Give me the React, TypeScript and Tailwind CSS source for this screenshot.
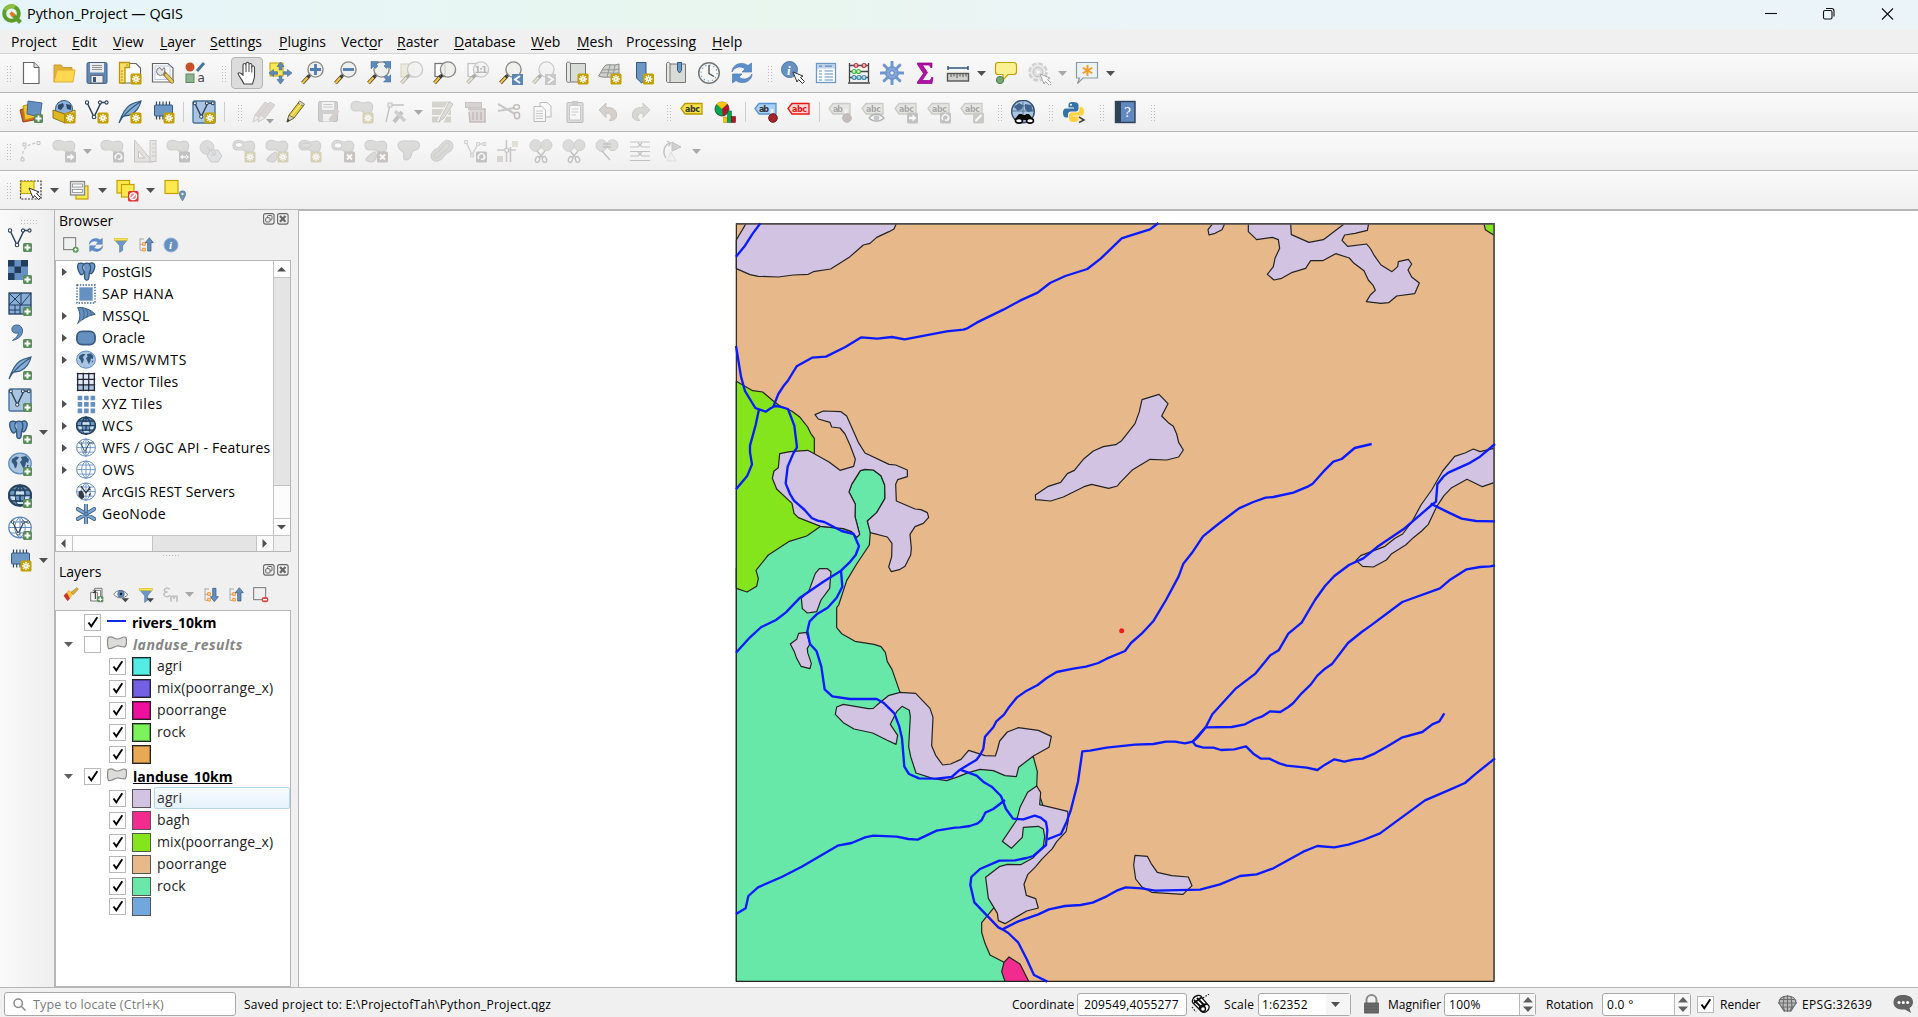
import React from "react";

type IconProps = { children: React.ReactNode; off?: boolean; size?: number; vb?: string };

function Ico({ children, off, size = 24, vb = "0 0 24 24" }: IconProps) {
  return (
    <svg width={size} height={size} viewBox={vb} fill="none" className={off ? "shrink-0 opacity-40 grayscale-[60%]" : "shrink-0"}>
      {children}
    </svg>
  );
}

/* ---------- shared badges ---------- */
const Star = ({ x = 12.5, y = 12.5 }: { x?: number; y?: number }) => (
  <g transform={`translate(${x} ${y})`}>
    <rect width="11" height="11" rx="1.5" fill="#c4a000" />
    <path d="M5.500 1.600V9.400M1.600 5.500H9.400M2.800 2.800L8.200 8.200M8.200 2.800L2.800 8.200" stroke="#fff" strokeWidth="1.300" />
    <circle cx="5.500" cy="5.500" r="1.500" fill="#fff" />
    <circle cx="5.500" cy="5.500" r="0.700" fill="#c4a000" />
  </g>
);
const Plus = ({ x = 14, y = 14, s = 1 }: { x?: number; y?: number; s?: number }) => (
  <g transform={`translate(${x} ${y}) scale(${s})`}>
    <rect width="9" height="9" rx="1.500" fill="#5a8c5a" />
    <path d="M4.500 1.500V7.500M1.500 4.500H7.500" stroke="#fff" strokeWidth="2" />
  </g>
);
const Square = ({ children, fill = "#7a7a7a" }: { children: React.ReactNode; fill?: string }) => (
  <g transform="translate(13 12.5)">
    <rect width="11" height="11" rx="1.500" fill={fill} />
    {children}
  </g>
);
const ArrowBadge = () => <Square><path d="M2 4.300h3.500V2L9.500 5.500L5.500 9V6.700H2Z" fill="#fff" /></Square>;
const TurnBadge = () => <Square><path d="M3 7.500A3.200 3.200 0 1 1 7.500 8M7.500 8l.5-2.500M7.500 8L4.800 7.500" stroke="#fff" strokeWidth="1.400" /></Square>;
const SpreadBadge = () => <Square><path d="M1 5.500L4 3V8ZM10 5.500L7 3V8ZM3 4.700H8V6.300H3Z" fill="#fff" /></Square>;
const CrossBadge = () => <Square fill="#9c7575"><path d="M3 3L8 8M8 3L3 8" stroke="#fff" strokeWidth="2" /></Square>;

const Blob = ({ d }: { d?: string }) => (
  <path d={d || "M1 6.500C1 3 3.500 1.300 6.500 1.300C10 1.300 11 3.500 14 3C17 2.300 19 1.500 21 3C23.500 5.500 22.500 9.500 21 12C19 14.500 15 14 13 12C11.500 10.500 10 10.500 7.500 10.800C3.500 11.200 1 10 1 6.500Z"} fill="#b2b5ae" stroke="#999c96" strokeWidth="1.300" />
);

const Lens = ({ children, cx = 14.5, cy = 8.500 }: { children?: React.ReactNode; cx?: number; cy?: number }) => (
  <>
    <path d="M8 15L1.500 22" stroke="#3c3c3c" strokeWidth="3.600" />
    <path d="M6.500 16.500L1.500 22" stroke="#f5c33b" strokeWidth="2.200" />
    <path d="M10 13L8 15" stroke="#222" strokeWidth="3" />
    <circle cx={cx} cy={cy} r="7.600" fill="#eeeeec" fillOpacity=".88" stroke="#888a85" strokeWidth="1.400" />
    {children}
  </>
);

const Globe = ({ dark, light }: { dark?: boolean; light?: boolean }) => (
  <>
    <ellipse cx="12" cy="11.500" rx="11.300" ry="10.300" fill={dark ? "#6d97c4" : light ? "#fff" : "#a9c5e2"} stroke={dark ? "#2a4560" : "#5f8cc0"} strokeWidth={dark ? 2 : 1.200} />
    {!dark && !light && (
      <path d="M4 7L8 4.500L11 5L10 7L8 8.500L9.500 11L8.500 15L7 16.500L5.500 12L3.500 10ZM13 5L18 4L21 7.500L20 11L18 10L17.500 13L15.500 17L13.500 13L12 10L14 8ZM19 13L21 13L19 16Z" fill="#34597f" />
    )}
    {(dark || light) && (
      <path d="M12 1V22M1 11.500H23M3 6H21M3 17H21M12 1C5 6 5 17 12 22M12 1C19 6 19 17 12 22" stroke={dark ? "#24415e" : "#5f8cc0"} strokeWidth={dark ? 1.600 : 1} />
    )}
    {dark && <path d="M8 7.500H16V10.500H8ZM2.500 12.500H7V16H4ZM17 12.500H21.500L20 16H17ZM8.500 18H15.500V20H10Z" fill="#cfe0f1" />}
  </>
);
const VNodes = ({ c = "#2e4358" }: { c?: string }) => (
  <>
    <path d="M2 2.500L9 17L16 2.500H21.500" stroke={c} strokeWidth="1.500" />
    <g fill="#fff" stroke={c} strokeWidth="1.100">
      <circle cx="2" cy="2.500" r="1.700" /><circle cx="9" cy="17" r="1.800" /><circle cx="15" cy="2.500" r="1.600" /><circle cx="21.500" cy="2.500" r="1.600" />
    </g>
  </>
);
const Feather = () => (
  <path d="M1 23C3 17 6 9 12 5C16 2.500 20 2 23 1C22 6 18 13 12 15C9 16 6 15.500 4.500 17L1 23ZM4 18C8 13 13 8 22 2" fill="#86aed6" stroke="#34597f" strokeWidth="1.200" />
);
const Chip = () => (
  <>
    <path d="M5.500 1.500V19.500M8.700 1.500V19.500M12 1.500V19.500M15.300 1.500V19.500M18.500 1.500V19.500" stroke="#2e4358" strokeWidth="1.200" />
    <rect x="3.500" y="5" width="18" height="11" rx="1" fill="#6d97c4" stroke="#34597f" />
  </>
);
const Elephant = () => (
  <path d="M3 2C6 .5 8 1.500 9.500 2.500C11 1.500 14 1 16 2C19 .5 22 1 22.500 4C23 7 21 12 19 13.500C18 14.500 16.500 13.500 16 13C15.500 15 16 18 15 20.500C14 22.500 11 22 10.500 20C10 18 10.500 14 10 12C9 14 7 16 5.500 15C3 12 .5 5 3 2ZM9.500 2.500C7.500 5 8 9 10 12M16 2C18 5 18 9 16 13M12 7V7.100" fill="#6d97c4" stroke="#2f537a" strokeWidth="1.500" />
);
const VBox = () => (
  <>
    <rect x="1" y="1" width="22" height="22" rx="1.500" fill="#a9c5e2" stroke="#4b729c" strokeWidth="1.400" />
    <g transform="translate(1 1) scale(.92)"><VNodes /></g>
  </>
);
const Refresh = () => (
  <>
    <path d="M2 11C2 3 12 0 18 4.500L21.500 2V11H12L15 8C11 4.500 5 5.500 2 11Z" fill="#5b8fcb" stroke="#4a7ab3" strokeWidth=".7" />
    <path d="M22 13C22 21 12 24 6 19.500L2.500 22V13H12L9 16C13 19.500 19 18.500 22 13Z" fill="#5b8fcb" stroke="#4a7ab3" strokeWidth=".7" />
  </>
);
const Tag = ({ fill = "#f7e14a", stroke = "#b89b00", text = "abc", color = "#333" }: { fill?: string; stroke?: string; text?: string; color?: string }) => (
  <>
    <path d="M1 8.500L5 3.500H22V14H5Z" fill={fill} stroke={stroke} strokeWidth="1.300" />
    <text x="5" y="11.600" fontSize="8" fontWeight="700" fontFamily="DejaVu Sans" fill={color} textLength={text.length === 2 ? 10 : 15}>{text}</text>
  </>
);
const Pencil = ({ c = "#e8cf3a" }: { c?: string }) => (
  <>
    <path d="M3 22L5 15L15 2L20 5L10 18Z" fill={c} stroke="#6b6530" strokeWidth="1" />
    <path d="M3 22L5 15L10 18ZM14 3.200L15.500 1L20.500 4L19 6.200Z" fill="#d8d2c4" stroke="#6b6530" strokeWidth=".8" />
    <path d="M3 22L3.800 19L6 20.300Z" fill="#333" />
    <path d="M7.500 16L17 4" stroke="#fff6b0" strokeWidth="1" />
  </>
);
const DullPencil = () => (
  <>
    <path d="M2 22L4 15L14 2L19 5L9 18Z" fill="#b9a6a0" stroke="#a08f8a" />
    <path d="M2 22L4 15L9 18Z" fill="#e8e4e0" stroke="#a08f8a" strokeWidth=".8" />
  </>
);
const Pointer = ({ x = 0, y = 0 }: { x?: number; y?: number }) => (
  <path transform={`translate(${x} ${y})`} d="M0 0L10 4L7.500 5.500L11.500 9.500L9.500 11.500L5.500 7.500L4 10Z" fill="#fff" stroke="#333" strokeWidth="1" />
);
const Scissors = () => (
  <>
    <path d="M8 12L14 19M16 12L10 19" stroke="#777" strokeWidth="1.500" />
    <ellipse cx="8.500" cy="20.500" rx="2" ry="3" stroke="#777" strokeWidth="1.400" transform="rotate(20 8.500 20.500)" />
    <ellipse cx="15.500" cy="20.500" rx="2" ry="3" stroke="#777" strokeWidth="1.400" transform="rotate(-20 15.500 20.500)" />
  </>
);
const TwoBlobs = () => (
  <>
    <ellipse cx="6.500" cy="6.500" rx="5.500" ry="5.800" fill="#b2b5ae" stroke="#8f928c" />
    <ellipse cx="17.500" cy="6.200" rx="5.500" ry="5.500" fill="#b2b5ae" stroke="#8f928c" />
  </>
);

/* ---------- toolbars ---------- */
function Btn({ children, menu, off, active }: { children: React.ReactNode; menu?: boolean; off?: boolean; active?: boolean }) {
  return (
    <div className={menu ? "flex h-full w-12 shrink-0 items-center" : "flex h-full w-[33px] shrink-0 items-center"}>
      <div className={active ? "ml-px flex size-8 items-center justify-center rounded-sm border border-[#b4b4b4] bg-[#dcdcdc]" : "flex w-[33px] items-center justify-center"}>
        <Ico off={off}>{children}</Ico>
      </div>
      {menu && <Caret off={off} />}
    </div>
  );
}
function Caret({ off }: { off?: boolean }) {
  return (
    <svg width="9" height="5" viewBox="0 0 9 5" className="ml-[3px] shrink-0">
      <path d="M0 0H9L4.500 5Z" fill={off ? "#a8a8a8" : "#505050"} />
    </svg>
  );
}
function Grip({ first }: { first?: boolean }) {
  return (
    <div className={first ? "flex h-full w-[14px] shrink-0 items-center pl-1.5" : "flex h-full w-[18px] shrink-0 items-center pl-[9px]"}>
      <div className="h-[17px] w-[5px] bg-[radial-gradient(circle,#bcbcbc_35%,transparent_45%)] bg-[length:3px_3px]" />
    </div>
  );
}
const Sep = () => (
  <div className="flex h-full w-2 shrink-0 items-center justify-center"><div className="h-5 w-px bg-[#cdcdcd]" /></div>
);
function Bar({ children }: { children: React.ReactNode }) {
  return <div className="flex h-[39px] shrink-0 items-center border-b border-[#b6b6b6] bg-linear-to-b from-[#fafafa] to-[#efefef]">{children}</div>;
}

function BarOne() {
  return (
    <Bar>
      <Grip first />
      <Btn><path d="M4.500 1.500H15L20 6.500V22.500H4.500Z" fill="#fff" stroke="#666" strokeWidth="1.200" /><path d="M15 1.500V6.500H20" fill="#ddd" stroke="#666" /></Btn>
      <Btn><path d="M2 21V4H9L11 6.500H20V9" fill="#e0b23a" stroke="#c9992a" /><path d="M2 21L5 9H23L21 21Z" fill="#ffd750" stroke="#dcae33" /></Btn>
      <Btn><rect x="2" y="1.500" width="20" height="21" rx="1.500" fill="#6188b5" stroke="#44618a" /><rect x="5" y="2" width="14" height="9.500" fill="#ececec" /><path d="M7 4.500H17M7 6.500H17M7 8.500H17" stroke="#888" strokeWidth=".9" /><rect x="6" y="14.500" width="12" height="7.500" fill="#eee" stroke="#667" /><rect x="8" y="16" width="3" height="5" fill="#345a86" /></Btn>
      <Btn><path d="M8 2.500H18L22.500 7V22H4V8Z" fill="#fff" stroke="#666" strokeWidth="1.200" /><path d="M1.500 1.500H11.500V6.500H7V22H1.500Z" fill="#f8e06a" stroke="#b8960f" strokeWidth="1.300" /><path d="M3 10H5M3 13H5M3 16H5M3 19H5M9 3V5" stroke="#b8960f" /><Star /></Btn>
      <Btn><path d="M1.500 2.500H17L22 7V21H1.500Z" fill="#fff" stroke="#666" strokeWidth="1.200" /><rect x="4" y="5" width="15" height="13.500" stroke="#b9c6ea" /><path d="M13 12L21 20.500" stroke="#8a7330" strokeWidth="4.200" strokeLinecap="round" /><path d="M15 14L21 20.500" stroke="#e7c85b" strokeWidth="2.600" strokeLinecap="round" /><path d="M9 6.500A4 4 0 1 0 13.500 11A4 4 0 0 0 13 6.500L11 9.500Z" fill="#e6e6e6" stroke="#777" /></Btn>
      <Btn><circle cx="6" cy="6" r="4.500" fill="#c8502c" /><path d="M13 10L20 2" stroke="#4b729c" strokeWidth="3" /><rect x="2" y="13" width="8" height="8.500" fill="#8fb48f" stroke="#5c8a5c" /><text x="13.500" y="21" fontSize="12" fontFamily="DejaVu Sans" fill="#444">a</text></Btn>
      <Grip />
      <Btn active><path d="M9 23C7 18 3.500 15 3 12.500C4 11 6 12 8 14V4C8.500 2 10.500 2 11 4V2.500C11.500 .8 13.700 1 14 2.500V3.500C14.500 2 16.500 2.300 16.800 4V5.500C17.500 4.500 19.300 4.700 19.500 6.500V15C19.500 18 18 20 17.500 23Z" fill="#fff" stroke="#444" strokeWidth="1.100" /><path d="M11 4V11M14 3.500V11M16.800 5.500V11.500" stroke="#444" /></Btn>
      <Btn><rect x="2" y="2" width="13" height="13" fill="#fce94f" stroke="#c4a000" /><g fill="#5d8abf" stroke="#3c6590" strokeWidth=".6"><path d="M12.500 1L16 5.500H13.800V9H11.200V5.500H9Z" /><path d="M12.500 23L16 18.500H13.800V15H11.200V18.500H9Z" /><path d="M1 12L5.500 8.500V10.700H9.500V13.300H5.500V15.500Z" /><path d="M24 12L19.500 8.500V10.700H15.500V13.300H19.500V15.500Z" /></g></Btn>
      <Btn><Lens><path d="M14.500 3V14M9 8.500H20" stroke="#4f7cb0" strokeWidth="2.800" /></Lens></Btn>
      <Btn><Lens><path d="M9 8.500H20" stroke="#4f7cb0" strokeWidth="2.800" /></Lens></Btn>
      <Btn><Lens /><g fill="#5d8abf" stroke="#3c6590" strokeWidth=".5"><path d="M4 .500H11.500L9 3L11 5L8.500 7.500L6.500 5.500L4 8Z" /><path d="M24 .500H16.500L19 3L17 5L19.500 7.500L21.500 5.500L24 8Z" /><path d="M24 21H16.500L19 18.500L17 16.500L19.500 14L21.500 16L24 13.500Z" /></g></Btn>
      <Btn off><rect x="1" y="3" width="13" height="13" fill="#e9df7a" stroke="#a99a40" /><Lens cx={15} /></Btn>
      <Btn><rect x="2" y="2.500" width="10" height="13" fill="#fff" stroke="#777" strokeWidth="1.300" /><Lens cx={15} /><path d="M12 4V13" stroke="#cfcfcf" /></Btn>
      <Btn off><rect x="2" y="2.500" width="10" height="13" fill="#fff" stroke="#777" strokeWidth="1.300" /><Lens cx={15}><text x="8.500" y="12" fontSize="9" fontWeight="700" fontFamily="DejaVu Sans" fill="#555" textLength="13">1:1</text></Lens></Btn>
      <Btn><Lens /><rect x="13" y="13" width="11" height="11" fill="#5d86b5" /><path d="M21 15L16 18.500L21 22" stroke="#fff" strokeWidth="1.900" /></Btn>
      <Btn off><Lens /><rect x="13" y="13" width="11" height="11" fill="#8a8a8a" /><path d="M16 15L21 18.500L16 22" stroke="#fff" strokeWidth="1.900" /></Btn>
      <Btn><path d="M5 2.500H20.500V21H5" fill="#d9dbd7" stroke="#777" /><path d="M1.500 2V19.500C1.500 22 5.500 22 5.500 20V2C5 .8 2 .8 1.500 2Z" fill="#e6e6e4" stroke="#777" /><Star /></Btn>
      <Btn><path d="M.5 15C3 12 5 6 8 4C12 3 17 5 21 3V18C15 14 8 18 .5 15Z" fill="#d0d2ce" stroke="#888" /><path d="M5 9C10 8 15 10 21 8M3 12C9 11 15 13 21 12M12 4L9 16M17 4L15 15" stroke="#888" strokeWidth=".8" /><Star /></Btn>
      <Btn><path d="M5.500 1.500H15V18L10.500 22L5.500 17Z" fill="#6d97c4" stroke="#34597f" /><Star x={12} /></Btn>
      <Btn><path d="M5 3H21.500V21.500H5" fill="#d9dbd7" stroke="#777" /><path d="M2.500 2.500V20C2.500 22 6 22 6 20V2.500C5.500 1 3 1 2.500 2.500Z" fill="#e6e6e4" stroke="#777" /><path d="M13.500 1.500H17.500V9.500L15.500 12L13.500 9.500Z" fill="#6d97c4" stroke="#34597f" /></Btn>
      <Btn><circle cx="12" cy="12" r="10.300" fill="#f7f7f6" stroke="#777" strokeWidth="1.500" /><path d="M12 4V12.500L17 15.500" stroke="#555" strokeWidth="1.400" /><circle cx="12" cy="12" r="8" stroke="#6d97c4" strokeWidth="1.200" strokeDasharray="1.200 3" /></Btn>
      <Btn><Refresh /></Btn>
      <Grip />
      <Btn><circle cx="8.500" cy="8.500" r="8" fill="#6690c0" stroke="#4f79a8" /><text x="6" y="13.500" fontSize="13" fontWeight="700" fontStyle="italic" fontFamily="Liberation Serif" fill="#fff">i</text><Pointer x={12} y={11} /></Btn>
      <Btn><rect x="2.500" y="2.500" width="19" height="19" fill="#fff" stroke="#6d97c4" strokeWidth="1.300" /><rect x="3" y="3" width="18" height="4.500" fill="#bcd2ea" /><path d="M5 5.200H8M11 5.200H18M5 10H8M10.500 10H19M5 13H8M10.500 13H19M5 16H8M10.500 16H19M5 19H8M10.500 19H19" stroke="#5f8cc0" strokeWidth="1.200" /></Btn>
      <Btn><path d="M2.500 2V21M21.500 2V21M1 22H23M2.500 4.500H21.500M2.500 10.500H21.500M2.500 16.500H21.500" stroke="#444" strokeWidth="1.300" /><g strokeWidth="1.200"><circle cx="9" cy="4.500" r="2" fill="#f6b5b5" stroke="#b33" /><circle cx="17" cy="4.500" r="2" fill="#f6b5b5" stroke="#b33" /><circle cx="7" cy="10.500" r="2" fill="#c6eec6" stroke="#4b4" /><circle cx="11.500" cy="10.500" r="2" fill="#c6eec6" stroke="#4b4" /><circle cx="7" cy="16.500" r="2" fill="#bcd8ee" stroke="#48a" /><circle cx="12" cy="16.500" r="2" fill="#bcd8ee" stroke="#48a" /><circle cx="17" cy="16.500" r="2" fill="#bcd8ee" stroke="#48a" /></g></Btn>
      <Btn><circle cx="12" cy="12" r="6.300" fill="#86aadb" stroke="#4f7cb8" /><path d="M12 1V6M12 18V23M1 12H6M18 12H23M4.200 4.200L7.800 7.800M16.200 16.200L19.800 19.800M19.800 4.200L16.200 7.800M7.800 16.200L4.200 19.800" stroke="#6f97cf" strokeWidth="3" strokeLinecap="round" /><circle cx="12" cy="12" r="2.300" fill="#e9f0fa" stroke="#4f7cb8" /></Btn>
      <Btn><path d="M4.500 2H19V6.500H17.500C17 4.500 16 4 14.500 4H9.500L14.500 11.500L9 19.500H15.500C17.500 19.500 18 18.500 18.500 16.500H20L19 22.500H4.500V21L10.500 12.500L4.500 3.500Z" fill="#b312a8" stroke="#860080" strokeWidth=".7" /></Btn>
      <Btn menu><path d="M2 7H22M2 5V9M22 5V9" stroke="#31577f" strokeWidth="1.500" /><rect x="1.500" y="12.500" width="21" height="7.500" fill="#d0d0ce" stroke="#555" strokeWidth="1.400" /><path d="M5 13V16M8 13V15.500M11 13V17M14 13V15.500M17 13V16M20 13V15.500" stroke="#555" /></Btn>
      <Btn><path d="M4 1.500H20C22 1.500 22.500 3 22.500 4.500V10.500C22.500 12.500 21.500 13.500 20 13.500H14L9 19V13.500H4C2 13.500 1.500 12 1.500 10.500V4.500C1.500 2.500 2.500 1.500 4 1.500Z" fill="#fbf193" stroke="#c4a000" strokeWidth="1.200" /><circle cx="6" cy="19" r="3.600" fill="#73a873" stroke="#4e804e" /></Btn>
      <Btn menu off><circle cx="11" cy="11" r="8.500" fill="#ddd" stroke="#999" strokeWidth="2.500" strokeDasharray="4.700 2" /><circle cx="11" cy="11" r="5" fill="#bbb" stroke="#777" /><path d="M9.500 8.500L14 11L9.500 13.500Z" fill="#fff" /><Pointer x={13} y={13} /></Btn>
      <Btn menu><path d="M1.500 1.500H22.500V17H8L2.500 22.500L4.500 17H1.500Z" fill="#eaf3fa" stroke="#8f9a9f" strokeWidth="1.200" /><path d="M12.500 4V15M7.700 6.700L17.300 12.300M17.300 6.700L7.700 12.300" stroke="#f79a1e" strokeWidth="1.900" /></Btn>
    </Bar>
  );
}

function BarTwo() {
  return (
    <Bar>
      <Grip first />
      <Btn><path d="M1 10L12 6L15 20L4 22Z" fill="#d0602c" stroke="#a0431a" /><path d="M4 6L15 3L17 17L6 20Z" fill="#f3c52c" stroke="#b8920b" /><path d="M9 1L23 3L21 17L8 14Z" fill="#6690c0" stroke="#44699a" /><Plus x={15} y={14} /></Btn>
      <Btn><circle cx="12" cy="9" r="8.500" fill="#8cb2dc" stroke="#34597f" /><path d="M6 5L11 3L12 6L9 10L6 9ZM14 4L19 5L19 10L15 9Z" fill="#2e4a68" /><path d="M1 10L13 14V23L1 18Z" fill="#e0b71c" stroke="#77600a" strokeWidth=".8" /><path d="M13 14L23 10V18L13 23Z" fill="#fbe25c" stroke="#77600a" strokeWidth=".8" /><Star /></Btn>
      <Btn><VNodes /><Star /></Btn>
      <Btn><Feather /><Star /></Btn>
      <Btn><Chip /><Star /></Btn>
      <Sep />
      <Btn><VBox /><Star /></Btn>
      <Sep />
      <Grip />
      <Btn off><DullPencil /><g transform="translate(5 0)"><DullPencil /></g><path d="M15 19H23L19 23.500Z" fill="#222" /></Btn>
      <Btn><Pencil /></Btn>
      <Btn off><rect x="1.500" y="1.500" width="19" height="20" rx="1.500" fill="#999" stroke="#777" /><rect x="5" y="2" width="12" height="8" fill="#eee" /><path d="M6.500 4.500H15.500M6.500 7H15.500" stroke="#888" /><rect x="6" y="14" width="10" height="7.500" fill="#eee" /><path d="M13 21L21 10" stroke="#c98f8f" strokeWidth="4" /></Btn>
      <Btn off><Blob /><Star /></Btn>
      <Btn menu off><path d="M3 22L7 5L21 5" stroke="#777" strokeWidth="1.300" /><rect x="5" y="3" width="4" height="4" fill="#ddd" stroke="#777" /><path d="M11 22L19 12" stroke="#777" strokeWidth="4" /><path d="M12 11L22 21" stroke="#999" strokeWidth="3.500" /></Btn>
      <Btn off><path d="M1 4.500H20M1 12H20M1 19.500H20" stroke="#a8a47c" strokeWidth="6" /><path d="M9 22L19 4" stroke="#fff" strokeWidth="6" /><path d="M8 22L10 17L18 2L22 4L13 18Z" fill="#bba" stroke="#877" /></Btn>
      <Btn off><rect x="1.500" y="2.500" width="16" height="5" fill="#b99" stroke="#877" /><path d="M4 9H21V22H6L5 12" fill="#caa" stroke="#966" strokeWidth="1.500" /><path d="M9 12V20M13 12V20M17 12V20" stroke="#966" strokeWidth="1.600" /></Btn>
      <Btn off><path d="M1 4L18 14M1 11L18 8" stroke="#888" strokeWidth="2.200" /><ellipse cx="19.500" cy="7" rx="3" ry="2.300" stroke="#866" strokeWidth="1.500" /><ellipse cx="20" cy="15.500" rx="2.600" ry="3.200" stroke="#866" strokeWidth="1.500" /></Btn>
      <Btn off><path d="M10 2.500H17L21 6V17H10Z" fill="#fff" stroke="#666" /><path d="M4 6.500H12L15.500 10V21.500H4Z" fill="#fff" stroke="#666" /><path d="M6 11H13M6 13.500H13M6 16H13M6 18.500H13" stroke="#888" /></Btn>
      <Btn off><rect x="4" y="2.500" width="16" height="20" rx="1" fill="#bbb" stroke="#666" /><rect x="6.500" y="5.500" width="11" height="14.500" fill="#fff" stroke="#888" /><rect x="9" y="1" width="6" height="4" fill="#888" /><path d="M8.500 9H15.500M8.500 12H15.500M8.500 15H13" stroke="#888" /></Btn>
      <Btn off><path d="M3 10L10 3V7.500C18 7 21 11 20.500 16C20 20 16 21 13 20.500C16 19 17 13 10 13V17.500Z" fill="#b8977d" stroke="#95765f" /></Btn>
      <Btn off><path d="M21 10L14 3V7.500C6 7 3 11 3.500 16C4 20 8 21 11 20.500C8 19 7 13 14 13V17.500Z" fill="#a7b09f" stroke="#858f7d" /></Btn>
      <Grip />
      <Btn><Tag /></Btn>
      <Btn><circle cx="9" cy="9" r="7" fill="#00a651" stroke="#222" strokeWidth=".7" /><path d="M9 9L3.500 4C6 1 12 1 14.500 4Z" fill="#ffc20e" /><path d="M9 9L14.500 4C17 7 16.500 13 10 16Z" fill="#b3122b" /><rect x="10.500" y="17" width="4" height="5.500" fill="#ffc20e" stroke="#a80" strokeWidth=".5" /><rect x="14.500" y="11" width="4" height="11.500" fill="#00a651" stroke="#053" strokeWidth=".5" /><rect x="18.500" y="16.500" width="4" height="6" fill="#b3122b" stroke="#500" strokeWidth=".5" /></Btn>
      <Sep />
      <Btn><Tag fill="#a9cff5" stroke="#5694d6" text="ab" /><path d="M18 9V16" stroke="#eee" strokeWidth="3" /><circle cx="19" cy="18" r="4.300" fill="#a3262c" stroke="#7c1418" /></Btn>
      <Btn><Tag fill="#ffd9d9" stroke="#e11" color="#e11" /></Btn>
      <Sep />
      <Btn off><Tag fill="#cfcdb8" stroke="#8d8b78" text="ab" /><path d="M18 9V16" stroke="#eee" strokeWidth="3" /><circle cx="19" cy="18" r="4.300" fill="#96676a" stroke="#7c5458" /></Btn>
      <Btn off><Tag fill="#cfcdb8" stroke="#8d8b78" /><path d="M8 18C12 13 19 13 23 18C19 22 12 22 8 18Z" fill="#fff" stroke="#555" strokeWidth="1.300" /><circle cx="15.500" cy="18" r="2.800" fill="#789" /></Btn>
      <Btn off><Tag fill="#cfcdb8" stroke="#8d8b78" /><ArrowBadge /></Btn>
      <Btn off><Tag fill="#cfcdb8" stroke="#8d8b78" /><TurnBadge /></Btn>
      <Btn off><Tag fill="#cfcdb8" stroke="#8d8b78" /><Square fill="#8f8d78"><path d="M2.500 8.500L8.500 2.500" stroke="#fff" strokeWidth="2.200" /></Square></Btn>
      <Grip />
      <Btn><circle cx="12" cy="11.500" r="11.300" fill="#a9c5e2" stroke="#2f4f74" strokeWidth="1.400" /><path d="M3 7L8 3L12 5L11 9L7 11ZM14 4L20 5L22 11L17 12L14 9Z" fill="#41658d" /><path d="M12 1V16M1 11H23M3 6H21" stroke="#41658d" strokeWidth=".8" /><path d="M8 14H11L11.700 15H14.300L15 14H18L23 20H3Z" fill="#0a0a0a" /><ellipse cx="8" cy="20.800" rx="3.500" ry="2.300" fill="#fff" stroke="#000" strokeWidth="1.600" /><ellipse cx="19" cy="20.800" rx="3.500" ry="2.300" fill="#fff" stroke="#000" strokeWidth="1.600" /></Btn>
      <Grip />
      <Btn><path d="M11 2C7 2 6.500 3.500 6.500 5V7.500H12V8.500H4C1.500 8.500 1 11 1 13C1 15.500 2 17.500 4 17.500H6V14.500C6 12.500 7.500 11.500 9 11.500H14C15.500 11.500 16.500 10 16.500 9V5C16.500 3 14.500 2 11 2Z" fill="#3573a6" /><path d="M12 22C16 22 16.500 20.500 16.500 19V16.500H11V15.500H19C21.500 15.500 22 13.500 22 11.500C22 9 21 7 19 7H17.500V9.500C17.500 11.500 16 12.500 14.500 12.500H9.500C8 12.500 7 14 7 15.500V19C7 21 8.500 22 12 22Z" fill="#ffd23e" /><circle cx="9" cy="4.800" r="1" fill="#fff" /><path d="M17 17L22 20L17 22.500" stroke="#444" strokeWidth="1.500" /></Btn>
      <Grip />
      <Btn><rect x="2.500" y="1.500" width="19.500" height="21" fill="#6188bf" stroke="#2c4058" strokeWidth="1.400" /><rect x="2" y="1" width="6" height="22" fill="#2f4256" /><text x="11" y="16.500" fontSize="13" fontFamily="DejaVu Serif" fill="#fff">?</text></Btn>
      <Grip />
    </Bar>
  );
}

const SmallBlob = "M8 23C6 23 1 22 2 20C4 18 6 15 10 13C12 12.500 13 17 12 19C11 21 10 23 8 23Z";
function BarThree() {
  return (
    <Bar>
      <Grip first />
      <Btn off><path d="M3 20C3 10 8 4 20 4" stroke="#888" strokeWidth="1.300" strokeDasharray="3 2" /><path d="M2 19H5V22H2ZM4 4H7V7H4ZM18 2.500H21V5.500H18Z" fill="#eee" stroke="#777" /></Btn>
      <Btn menu off><Blob /><ArrowBadge /></Btn>
      <Btn off><Blob /><TurnBadge /></Btn>
      <Btn off><path d="M1.500 1L20 23H1.500ZM5.500 12V19H11.500Z" fill="#d3c6c0" stroke="#8d7c76" fillRule="evenodd" /><rect x="17" y="1.500" width="6" height="21" fill="#d8cfb8" stroke="#888" /><path d="M19 5H23M19 9H23M19 13H23M19 17H23" stroke="#888" /></Btn>
      <Btn off><Blob /><SpreadBadge /></Btn>
      <Btn off><circle cx="8" cy="8.500" r="7" fill="#b2b5ae" stroke="#999" /><path d="M11 11H19L23 17L19 23H12L8 17Z" fill="#c2c9d0" stroke="#888" /><path d="M8 8L16 16M16 16V12M16 16H12" stroke="#888" /></Btn>
      <Btn off><Blob /><ellipse cx="7" cy="6" rx="4" ry="2.500" fill="#fff" stroke="#888" /><Star /></Btn>
      <Btn off><Blob /><Blob d={SmallBlob} /><Star /></Btn>
      <Btn off><Blob /><ellipse cx="8" cy="6.500" rx="5" ry="2.500" stroke="#888" /><Star /></Btn>
      <Btn off><Blob /><ellipse cx="7" cy="6.500" rx="4" ry="2.800" fill="#fff" stroke="#888" /><CrossBadge /></Btn>
      <Btn off><Blob /><Blob d={SmallBlob} /><CrossBadge /></Btn>
      <Btn off><Blob d="M1 6C1 2.500 5 1.500 9 2C13 2.500 18 1 21 3C24 6 22 11 18 11C15.500 11 15 13 14.500 15.500C13.500 20 9.500 22 7 20C6 18 8 15 6 13C3 11 1 9 1 6Z" /></Btn>
      <Btn off><Blob d="M2 20C-1 14 4 11 8 9C11 6 12 3 16 1.500C20 1 24 4 22.500 9C21 13 17 13 14 17C11 22 5 24 2 20Z" /><Blob d="M4 18C3 15 8 13 11 10C13 8 14 5 16.500 4C19 4 20 6 19 8C18 11 14 12 11 15C9 18 6 20 4 18Z" /></Btn>
      <Btn off><path d="M3 3L9 16L15 5H21" stroke="#999" strokeWidth="1.400" /><path d="M1.500 1.500H4.500V4.500H1.500ZM7.500 15H10.500V18H7.500ZM13.500 3.500H16.500V6.500H13.500ZM20 3.500H23V6.500H20Z" fill="#ddd" stroke="#999" /><TurnBadge /></Btn>
      <Btn off><path d="M1 11H20M10.500 1V23M14.500 8V23" stroke="#888" strokeWidth="1.600" /><rect x="9" y="9.500" width="3.500" height="3.500" fill="#eee" stroke="#888" /><rect x="16" y="2" width="6" height="6" fill="#c8bf90" /><rect x="1" y="17" width="6" height="6" fill="#c7a3a3" /></Btn>
      <Btn off><TwoBlobs /><Scissors /></Btn>
      <Btn off><TwoBlobs /><Scissors /></Btn>
      <Btn off><TwoBlobs /><path d="M8 5H16M8 8H16M7 12L15 21" stroke="#777" strokeWidth="1.500" /></Btn>
      <Btn off><path d="M2 3H22M2 8H10L12 6L14 8H22M2 12.500H22M2 17H10L12 15L14 17H22M2 21.500H22M10 4L12 6L14 4M10 13L12 15L14 13" stroke="#777" strokeWidth="1.200" /></Btn>
      <Btn menu off><path d="M5 19C1 13 3 6 9 4M6 2L9.500 4L7.500 7.500" stroke="#777" strokeWidth="1.400" /><path d="M11 3L20 8L11 12Z" fill="#999" stroke="#777" /><path d="M10 13L15 22H6Z" fill="#eee" stroke="#bbb" /></Btn>
    </Bar>
  );
}

function BarFour() {
  return (
    <Bar>
      <Grip first />
      <Btn menu><rect x="1.500" y="3" width="20.500" height="18" stroke="#333" strokeWidth="1.200" strokeDasharray="2 1.300" /><rect x="2" y="3.500" width="13" height="12" fill="#fce94f" stroke="#c4a000" /><Pointer x={10} y={10} /></Btn>
      <Btn menu><rect x="9" y="8" width="12" height="13" fill="#fce94f" stroke="#c4a000" strokeWidth="1.200" /><rect x="3.500" y="3.500" width="14" height="13.500" fill="#eee" stroke="#888a85" strokeWidth="1.300" /><rect x="5.500" y="6" width="10" height="3" fill="#fff" stroke="#888a99" strokeWidth=".8" /><rect x="5.500" y="11.500" width="10" height="3" fill="#fff" stroke="#888a99" strokeWidth=".8" /></Btn>
      <Btn menu><rect x="2" y="2.500" width="12.500" height="12.500" fill="#fce94f" stroke="#c4a000" strokeWidth="1.200" /><rect x="6.500" y="6.500" width="12.500" height="12.500" fill="#fce94f" stroke="#c4a000" strokeWidth="1.200" /><rect x="13" y="13" width="10.500" height="10.500" rx="1.500" fill="#d33" /><circle cx="18.200" cy="18.200" r="3.400" fill="#e88" stroke="#fff" strokeWidth="1.300" /><path d="M16 20.500L20.500 16" stroke="#fff" strokeWidth="1.400" /></Btn>
      <Btn><rect x="2" y="2.500" width="13" height="13" fill="#fce94f" stroke="#c4a000" strokeWidth="1.200" /><path d="M19.500 23C18 20 16.300 18 16.300 16A3.200 3.200 0 0 1 22.700 16C22.700 18 21 20 19.500 23Z" fill="#6f93b3" stroke="#4f7390" strokeWidth=".6" /><circle cx="19.500" cy="16" r="1.200" fill="#dfe9f2" /></Btn>
    </Bar>
  );
}

function MenuBar() {
  const items: [string, number, string][] = [
    ["Project", 3, "w-[61px]"], ["Edit", 0, "w-[41px]"], ["View", 0, "w-[47px]"], ["Layer", 0, "w-[50px]"], ["Settings", 0, "w-[69px]"],
    ["Plugins", 0, "w-[62px]"], ["Vector", 4, "w-[56px]"], ["Raster", 0, "w-[57px]"], ["Database", 0, "w-[77px]"], ["Web", 0, "w-[46px]"],
    ["Mesh", 0, "w-[49px]"], ["Processing", 3, "w-[86px]"], ["Help", 0, "w-[40px]"],
  ];
  return (
    <div className="flex h-[25px] shrink-0 items-center border-b border-[#d4d4d4] bg-[#f0f0f0] pt-px pl-[11px] text-sm">
      {items.map(([t, u, w]) => (
        <div key={t} className={`${w} shrink-0 whitespace-nowrap`}>
          {t.slice(0, u)}<span className="underline underline-offset-2">{t[u]}</span>{t.slice(u + 1)}
        </div>
      ))}
    </div>
  );
}

/* ---------- side strip ---------- */
function SideStrip() {
  const tools: [React.ReactNode, boolean?][] = [
    [<><VNodes /><Plus x={15} y={15} /></>],
    [<><rect width="20" height="20" fill="#6690c0" /><path d="M0 0H6.500V6.500H0ZM13 0H20V6.500H13ZM6.500 6.500H13V13H6.500ZM0 13H6.500V20H0Z" fill="#223d5c" /><Plus x={15} y={15} /></>],
    [<><rect x="1" y="1" width="22" height="21" fill="#86aed6" stroke="#223d5c" strokeWidth="1.300" /><path d="M1 13H23M13 1V13M1 1L13 13M13 1L1 13M13 13L23 1M7 13V22M12 13V22M1 18H12" stroke="#223d5c" strokeWidth="1" /><Plus x={15} y={15} /></>],
    [<><path d="M9 1C4 1 3 5 4.500 7.500C6 9.500 9 9.500 10.500 8.500C10 12 8 14 4.500 16.500C11 15 15 11 14.500 6C14 3 12 1 9 1Z" fill="#6690c0" stroke="#3c6590" /><Plus x={15} y={15} /></>],
    [<><Feather /><Plus x={15} y={15} /></>],
    [<><VBox /><Plus x={15} y={15} /></>],
    [<><g transform="scale(.85)"><Elephant /></g><Plus x={15} y={15} /></>, true],
    [<><Globe /><Plus x={15} y={15} /></>],
    [<><Globe dark /><Plus x={15} y={15} /></>],
    [<><Globe light /><g transform="translate(3 4) scale(.8)"><VNodes /></g><Plus x={15} y={15} /></>],
    [<><Chip /><Star /></>, true],
  ];
  return (
    <div className="flex w-[54px] shrink-0 flex-col bg-linear-to-r from-[#fafafa] to-[#eeeeee]">
      <div className="flex h-[14px] items-end pl-5">
        <div className="h-[5px] w-[17px] bg-[radial-gradient(circle,#bcbcbc_35%,transparent_45%)] bg-[length:3px_3px]" />
      </div>
      {tools.map(([node, menu], i) => (
        <div key={i} className="flex h-8 shrink-0 items-center pl-2">
          <Ico>{node}</Ico>
          {menu && <span className="ml-1"><Caret /></span>}
        </div>
      ))}
    </div>
  );
}

/* ---------- dock panels ---------- */
function DockTitle({ title }: { title: string }) {
  return (
    <div className="flex h-5 shrink-0 items-center pr-[9px] pl-[4px]">
      <span className="flex-1 pt-px text-sm">{title}</span>
      <svg width="26" height="12" viewBox="0 0 26 12" fill="none" stroke="#666" className="-mt-[3px]">
        <rect x=".6" y=".6" width="10.500" height="10.500" rx="2" strokeWidth="1.100" /><rect x="4.500" y="2.500" width="4.500" height="4.500" rx="1" /><rect x="2.700" y="4.700" width="4.300" height="4.300" rx="1" fill="#f0f0f0" />
        <rect x="14.600" y=".6" width="10.500" height="10.500" rx="2" strokeWidth="1.100" /><path d="M17 3L22.500 8.700M22.500 3L17 8.700" strokeWidth="2.200" />
      </svg>
    </div>
  );
}
const Funnel = () => (
  <>
    <path d="M3 5H21L14.500 13V20L10 23V13Z" fill="#6d97c4" stroke="#5079a8" /><rect x="2.500" y="2" width="19" height="3.500" fill="#fce94f" stroke="#c4a000" strokeWidth=".6" />
  </>
);
const TreeUp = ({ down }: { down?: boolean }) => (
  <>
    <path d="M3 2V20M3 3H9M3 11H9M3 20H9" stroke="#999" strokeWidth="1.200" />
    <path d="M7 8.500H11V12.500H7ZM7 17H11V21H7Z" fill="#fbe0b5" stroke="#f08c1a" strokeWidth="1.300" />
    <path d={down ? "M17 22L11 14.500H14.500V2H19.500V14.500H23Z" : "M17 1L11 8.500H14.500V21H19.500V8.500H23Z"} fill="#6690c0" stroke="#2f537a" strokeWidth="1" />
  </>
);
const InfoDisc = () => (
  <>
    <circle cx="12" cy="12" r="10.500" fill="#6690c0" stroke="#8fb0d6" strokeWidth="1.500" /><text x="9" y="18" fontSize="17" fontWeight="700" fontStyle="italic" fontFamily="Liberation Serif" fill="#fff">i</text>
  </>
);

function ScrollGlyph({ d }: { d: string }) {
  return <svg width="9" height="9" viewBox="0 0 9 9" className="mr-px"><path d={d} fill="#505050" /></svg>;
}

function BrowserPanel() {
  const rows: [string, boolean, React.ReactNode, string][] = [
    ["PostGIS", true, <Elephant />, "tracking-[0px]"],
    ["SAP HANA", false, <><rect x="4" y="4" width="16" height="16" fill="#6690c0" /><rect x="1.200" y="1.200" width="21.600" height="21.600" stroke="#34597f" strokeWidth="1.600" strokeDasharray="1.700 1.700" /></>, "tracking-[0.6px]"],
    ["MSSQL", true, <><path d="M2 2C8 1 18 4 23 10C16 11 8 15 2 21C6 14 5 7 2 2Z" fill="#6690c0" stroke="#34597f" strokeWidth="1.200" /><path d="M7 2C11 7 10 12 8 17M12 4C15 8 14 11 13 14M17 6C19 8 18 10 18 12" stroke="#34597f" /></>, "tracking-[0.3px]"],
    ["Oracle", true, <rect x="1.200" y="4" width="21.600" height="16" rx="6" fill="#6690c0" stroke="#3b5c80" strokeWidth="2.200" />, "tracking-[0.1px]"],
    ["WMS/WMTS", true, <Globe />, "tracking-[0.75px]"],
    ["Vector Tiles", false, <><rect x="2" y="2" width="20" height="20" fill="#dfeaf5" /><rect x="2" y="15" width="20" height="7" fill="#a9c5e2" /><path d="M2 1V23M8.700 1V23M15.300 1V23M22 1V23M1 2H23M1 8.700H23M1 15.300H23M1 22H23" stroke="#223" strokeWidth="1.500" /></>, "tracking-[0.1px]"],
    ["XYZ Tiles", true, <path d="M2 2H7.500V7.500H2ZM9.700 2H15.200V7.500H9.700ZM17.500 2H23V7.500H17.500ZM2 9.700H7.500V15.200H2ZM9.700 9.700H15.200V15.200H9.700ZM17.500 9.700H23V15.200H17.500ZM2 17.500H7.500V23H2ZM9.700 17.500H15.200V23H9.700ZM17.500 17.500H23V23H17.500Z" fill="#6690c0" />, "tracking-[0.4px]"],
    ["WCS", true, <Globe dark />, "tracking-[0.7px]"],
    ["WFS / OGC API - Features", true, <><Globe light /><g transform="translate(4 4) scale(.75)"><VNodes /></g></>, "tracking-[0.21px]"],
    ["OWS", true, <Globe light />, "tracking-[0.5px]"],
    ["ArcGIS REST Servers", false, <><Globe light /><path d="M3 12L6 10L9 13L10 18L7 21L3 17ZM13 11L16 8L18 9ZM15 15L18 13L17 17Z" fill="#333b45" /><path d="M6 5L12 13L17 6" stroke="#333b45" strokeWidth="1.600" /></>, "tracking-[0.13px]"],
    ["GeoNode", false, <><path d="M12 1V23M2 6L22 18M22 6L2 18" stroke="#34597f" strokeWidth="4.600" strokeLinecap="round" /><path d="M12 1V23M2 6L22 18M22 6L2 18" stroke="#7fa8d4" strokeWidth="2.800" strokeLinecap="round" /><circle cx="12" cy="12" r="2.500" fill="#6690c0" stroke="#34597f" /></>, "tracking-[0.3px]"],
  ];
  return (
    <div className="flex h-[342px] shrink-0 flex-col">
      <DockTitle title="Browser" />
      <div className="flex h-[30px] shrink-0 items-center gap-[9px] pb-px pl-[8px]">
        <Ico size={16}><rect x="1" y="1" width="18" height="18" stroke="#777" strokeWidth="1.500" /><circle cx="19" cy="19" r="4.500" fill="#5a9a5a" /><path d="M19 16.500V21.500M16.500 19H21.500" stroke="#fff" strokeWidth="1.300" /></Ico>
        <Ico size={16}><Refresh /></Ico>
        <Ico size={16}><Funnel /></Ico>
        <Ico size={16}><TreeUp /></Ico>
        <Ico size={16}><InfoDisc /></Ico>
      </div>
      <div className="flex h-[292px] w-[236px] flex-col border border-[#b6b6b6] bg-white">
        <div className="flex h-[274px] shrink-0">
          <div className="w-[217px] shrink-0 overflow-hidden">
            {rows.map(([t, open, ic, track]) => (
              <div key={t} className="flex h-[22px] items-center pl-[6px]">
                <span className="flex w-[14px] shrink-0">{open && <svg width="5" height="8" viewBox="0 0 5 8"><path d="M0 0L5 4L0 8Z" fill="#505050" /></svg>}</span>
                <Ico size={20}>{ic}</Ico>
                <span className={`ml-[6px] text-sm whitespace-nowrap ${track}`}>{t}</span>
              </div>
            ))}
          </div>
          <div className="flex w-[17px] flex-col border-l border-[#c4c4c4] bg-[#e4e4e4]">
            <div className="flex h-[17px] items-center justify-center border-b border-[#c4c4c4] bg-[#fcfcfc]"><ScrollGlyph d="M0 6.500L4.500 2L9 6.500Z" /></div>
            <div className="flex-1" />
            <div className="h-[33px] border-t border-[#c4c4c4] bg-[#fcfcfc]" />
            <div className="flex h-[17px] items-center justify-center border-t border-[#c4c4c4] bg-[#fcfcfc]"><ScrollGlyph d="M0 2L4.500 6.500L9 2Z" /></div>
          </div>
        </div>
        <div className="flex h-4 border-t border-[#c4c4c4] bg-[#e4e4e4]">
          <div className="flex w-[17px] items-center justify-center border-r border-[#c4c4c4] bg-[#fcfcfc]"><ScrollGlyph d="M6.500 0L2 4.500L6.500 9Z" /></div>
          <div className="w-20 border-r border-[#c4c4c4] bg-[#fcfcfc]" />
          <div className="flex-1" />
          <div className="flex w-[17px] items-center justify-center border-l border-[#c4c4c4] bg-[#fcfcfc]"><ScrollGlyph d="M2.500 0L7 4.500L2.500 9Z" /></div>
          <div className="w-[17px] border-l border-[#c4c4c4] bg-[#f0f0f0]" />
        </div>
      </div>
    </div>
  );
}

function Check({ on }: { on: boolean }) {
  return (
    <span className="flex size-[17px] shrink-0 items-center justify-center border border-[#b9b9b9] bg-white">
      {on && <svg width="12" height="12" viewBox="0 0 12 12"><path d="M1.500 6.500L4.300 10.300L10.300 1.300" fill="none" stroke="#000" strokeWidth="1.900" /></svg>}
    </span>
  );
}
const PolySymbol = () => (
  <svg width="20" height="14" viewBox="0 0 20 14" className="mt-[-3px] shrink-0"><path d="M1 2C3 .3 5 .8 7 2C9 3.300 12 3 14 2C16 1 18 .7 19 1.500C20 5 19.500 8 18.500 10.500C16 12 13 9.500 10 10C7 10.500 4 13.500 1.500 12.500C0 9 .5 5 1 2Z" fill="#dcdcdb" stroke="#8a8a8a" strokeWidth="1.200" /></svg>
);

function Legend({ label, swatch, selected, dark, h = "h-[22px]" }: { label: string; swatch: string; selected?: boolean; dark?: boolean; h?: string }) {
  return (
    <div className={`flex ${h} shrink-0 items-center pl-[53px]`}>
      <Check on />
      <span className={`ml-[6px] size-[19px] shrink-0 border ${dark ? "border-[#222] outline-1 -outline-offset-2 outline-black/30" : "border-[#555]"} ${swatch}`} />
      <span className={selected ? "ml-[3px] flex h-[22px] flex-1 items-center rounded-[2px] border border-[#b5d7ec] bg-linear-to-b from-[#f8fcff] to-[#e5f2fc] pl-[2px] text-sm tracking-[0.12px] text-[#333]" : "ml-[6px] text-sm tracking-[0.12px] whitespace-nowrap text-[#222]"}>{label}</span>
    </div>
  );
}

function LayersPanel() {
  return (
    <div className="flex flex-1 flex-col">
      <div className="flex h-[9px] items-start justify-center pr-3 pt-[2px]"><div className="h-[3px] w-[17px] bg-[radial-gradient(circle,#bcbcbc_35%,transparent_45%)] bg-[length:3px_3px]" /></div>
      <DockTitle title="Layers" />
      <div className="mb-px flex h-[28px] shrink-0 items-center pb-px pl-[8px]">
        <div className="flex gap-[9px]">
          <Ico size={16}><path d="M1 13L9 5L15 11L7 21Z" fill="#e8762c" /><path d="M1 13L5 9L11 16L7 21Z" fill="#c8362c" /><path d="M8 5L12 8L15 11L10 17L6 8Z" fill="#f5c93b" /><path d="M12 8L21 1L23 3L16 11Z" fill="#d7b04a" stroke="#a37b20" /></Ico>
          <Ico size={16}><path d="M7 5H19V16M4 8H14V21H4ZM10 5V2H21V15" stroke="#777" strokeWidth="1.500" fill="#fff" fillOpacity=".5" /><path d="M11 18V6L8 9" stroke="#333" strokeWidth="1.600" /><Plus x={14} y={14} /></Ico>
          <Ico size={16}><path d="M1 11C6 3 17 3 22 12C16 18 7 18 1 11Z" fill="#fff" stroke="#777" strokeWidth="1.500" /><circle cx="12" cy="10.500" r="5" fill="#5f8cc0" stroke="#3c5f88" /><circle cx="12" cy="10.500" r="1.800" fill="#111" /><path d="M13 17H24L18.500 23Z" fill="#444" /></Ico>
          <Ico size={16}><Funnel /><path d="M13 17H24L18.500 23Z" fill="#444" /></Ico>
          <Ico size={16} off><path d="M10 3.500C7 0 1.500 2 2 5C2.500 7.500 6 7.500 7 7.500C3 7.500 1 9.500 1.500 12C2.500 15 8 15.500 10.500 12.500" stroke="#777" strokeWidth="2.200" /><path d="M12 22V14H21V22M16.500 14V18" stroke="#777" strokeWidth="2.500" /></Ico>
        </div>
        <div className="mr-[8px] ml-[3px] flex w-[13px]"><Caret off /></div>
        <div className="flex gap-[9px]">
          <Ico size={16}><TreeUp down /></Ico>
          <Ico size={16}><TreeUp /></Ico>
          <Ico size={16}><rect x="1" y="1" width="18" height="18" stroke="#777" strokeWidth="1.500" /><rect x="13" y="15" width="10" height="8" rx="3.500" fill="#e04848" /><path d="M15 19H21" stroke="#fff" strokeWidth="2" /></Ico>
        </div>
      </div>
      <div className="flex h-[377px] w-[236px] flex-col border border-[#b6b6b6] bg-white">
        <div className="flex h-[22px] shrink-0 items-center pl-[28px] font-bold">
          <Check on /><span className="mt-[-2px] ml-[6px] h-0.5 w-[19px] bg-[#1029f0]" /><span className="ml-[6px] pt-px text-sm">rivers_10km</span>
        </div>
        <div className="flex h-[22px] shrink-0 items-center pl-[8px] font-bold text-[#858585] italic">
          <svg width="9" height="5" viewBox="0 0 9 5" className="mr-[11px]"><path d="M0 0H9L4.500 5Z" fill="#606060" /></svg>
          <Check on={false} /><span className="ml-[6px]"><PolySymbol /></span><span className="ml-[6px] pt-px text-sm tracking-[0.45px]">landuse_results</span>
        </div>
        <Legend label="agri" swatch="bg-[#53ede4]" dark />
        <Legend label="mix(poorrange_x)" swatch="bg-[#7360e3]" dark />
        <Legend label="poorrange" swatch="bg-[#f00f9d]" dark />
        <Legend label="rock" swatch="bg-[#7cf25c]" dark />
        <Legend label="" swatch="bg-[#e9a854]" dark />
        <div className="flex h-[22px] shrink-0 items-center pl-[8px] font-bold">
          <svg width="9" height="5" viewBox="0 0 9 5" className="mr-[11px]"><path d="M0 0H9L4.500 5Z" fill="#606060" /></svg>
          <Check on /><span className="ml-[6px]"><PolySymbol /></span><span className="ml-[6px] pt-px text-sm underline">landuse_10km</span>
        </div>
        <Legend label="agri" swatch="bg-[#d2c3e3]" selected />
        <Legend label="bagh" swatch="bg-[#f22c8e]" />
        <Legend label="mix(poorrange_x)" swatch="bg-[#85e51c]" />
        <Legend label="poorrange" swatch="bg-[#e6b88a]" />
        <Legend label="rock" swatch="bg-[#69e8a9]" />
        <Legend label="" swatch="bg-[#72a7dd]" h="h-[18px]" />
      </div>
    </div>
  );
}

/* ---------- map ---------- */
type Part = [0 | 1, 0 | 1, string];
/* Survey sheets form a 2x2 grid; each part is digitised in its own sheet's units. */
const trace = (parts: Part[], close = false) =>
  "M" +
  parts
    .map(([cx, cy, s]) => s.trim().split(/\s+/).map((p) => { const [x, y] = p.split(",").map(Number); return `${x + cx * 1170} ${y + cy * 1155}`; }).join("L"))
    .join("L") +
  (close ? "Z" : "");

const ROCK: Part[] = [
  [0, 0, "19,1060 60,1030 90,960 160,900 272,934 340,941 365,950 380,967 389,958 375,905 376,868 357,831 365,808 391,767 405,763 430,765 453,782 464,810 465,850 440,893 412,918 421,950 418,990 380,1047 350,1097 326,1170"],
  [0, 1, "320,23 320,83 335,101 375,124 432,133 453,140 466,157 472,185 486,208 510,277 575,330 575,440 600,510 650,520 720,485 800,490 880,480 910,470 922,515 920,560 960,680 960,740 925,778 870,830 830,900 810,915 790,925 755,968 755,997 765,1030 780,1065 822,1087 840,1110 840,1144 19,1144"],
];
const MIX: Part[][] = [
  [[0, 0, "19,499 68,527 98,531 130,558 150,573 185,588 210,607 233,636 242,655 253,670 253,716 200,800 230,900 272,934 230,963 178,979 115,1020 78,1066 85,1090 80,1114 51,1131 19,1120"]],
  [[1, 0, "1092,26 1096,44 1122,61 1122,26"]],
];
const AGRI: Part[][] = [
  [[0, 0, "19,75 48,26 499,26 492,42 477,50 440,67 420,85 400,90 360,125 302,162 250,170 235,178 190,180 145,186 85,184 60,179 19,161"]],
  [[0, 0, "149,716 180,710 233,706 253,716 297,741 330,766 371,754 376,733 360,690 345,657 330,639 305,636 300,622 265,612 255,599 280,588 333,590 350,603 385,682 405,714 477,748 497,750 532,765 532,785 503,794 497,808 499,858 555,882 573,884 592,893 596,907 580,925 555,935 540,958 544,1000 542,1020 525,1054 508,1064 484,1070 476,1056 485,1025 486,985 472,966 421,953 412,918 440,893 465,850 464,810 453,782 430,765 405,763 391,767 365,808 357,831 376,868 375,905 389,958 380,967 365,950 340,941 272,934 205,908 192,895 186,865 140,822 127,790 132,768 145,758"]],
  [[0, 0, "268,1061 292,1061 303,1070 299,1120 273,1155"], [0, 1, "260,35 232,39 217,26 214,-5"], [0, 0, "237,1127 256,1075"]],
  [[0, 1, "206,100 229,97 240,132 232,145 233,158 244,190 240,206 213,199 200,175 193,155 181,132 200,118"]],
  [[0, 1, "510,277 557,280 600,325 609,352 605,437 617,466 638,495 662,492 693,478 716,451 765,467 796,468 802,450 809,423 832,396 865,383 925,391 964,409 957,442 910,468 866,502 859,530 825,527 790,512 750,508 715,518 685,530 650,542 610,536 558,519 542,470 536,440 541,350 538,331 516,319 500,335 481,373 503,406 498,433 470,420 428,399 372,387 340,368 316,343 320,321 340,313 415,326 430,325 440,316 475,287"]],
  [[0, 1, "920,558 932,577 929,614 1013,634 1015,660 1008,695 980,725 967,746 935,778 917,800 893,824 882,853 889,886 917,896 925,924 890,933 825,971 805,962 802,940 790,920 775,895 767,832 808,800 832,793 872,794 910,773 940,740 944,710 940,687 925,679 880,682 877,712 844,745 817,724 860,660 870,622 893,577"]],
  [[1, 0, "278,26 264,44 267,60 285,55 306,44 314,26"]],
  [[1, 0, "385,26 385,50 410,74 457,67 475,74 479,100 465,130 460,155 442,178 462,195 485,190 517,172 557,160 572,137 608,137 647,116 688,129 700,143 732,167 745,195 760,212 766,226 751,240 739,260 783,265 806,263 830,243 884,236 898,204 875,186 864,165 875,147 865,133 835,140 833,155 816,170 783,150 763,122 752,102 740,87 683,94 666,76 674,60 705,55 742,46 746,26 673,26 625,63 610,74 567,82 514,59 512,26"]],
  [[0, 0, "916,840 955,814 992,802 1012,776 1033,766 1060,733 1090,708 1120,695 1157,689 1175,677"], [1, 0, "45,626 58,590 66,554 117,538 144,566 125,603 145,623 160,634 170,657 176,682 190,705 176,726 140,735 90,733 38,764 0,803"], [0, 0, "1162,813 1136,820 1085,808 1062,815 1000,846 962,858 917,854"]],
  [[1, 0, "1122,700 1080,710 1060,702 1035,714 1004,724 968,768 935,825 903,870 876,920 848,957 825,970 795,994 722,1022 708,1036 728,1054 760,1056 799,1035 815,1016 857,990 880,968 905,948 925,928 950,875 972,842 995,818 1041,793 1087,815 1122,803"]],
  [[1, 1, "45,766 82,769 93,790 112,817 155,827 205,831 216,857 189,883 95,877 65,860 47,837 41,795"]],
];
const BAGH: Part[] = [[0, 1, "837,1071 870,1092 896,1144 825,1144 815,1115 822,1087"]];
const RIVERS: Part[][] = [
  [[0, 0, "18,125 45,92 68,56 91,25"]],
  [[0, 0, "130,575 145,537 160,514 173,498 200,454 246,428 288,425 346,396 394,367 442,371 486,366 524,373 650,349 700,344 712,340 740,323 820,284 870,257 923,233 960,204 1006,183 1072,162 1112,131 1175,70"], [1, 0, "30,62 90,43 115,24"]],
  [[0, 0, "18,393 33,485 45,528 76,579 87,583 107,590 122,580 135,573 150,575 174,582 193,632 201,697 190,715 173,755 167,805 180,837 192,857 224,885 245,909 263,917 283,921 335,948 371,957 387,994 377,1020 358,1043 333,1067 280,1100 210,1148"], [0, 1, "168,37 138,60 94,81 60,112 18,158"]],
  [[0, 0, "87,583 77,630 60,692 60,712 66,748 52,782 18,823"]],
  [[0, 0, "333,1067 337,1115 320,1148"], [0, 1, "293,23 260,43 239,64 232,93 240,132 260,154 274,200 284,268 307,289 360,297 440,297 460,308 493,340 508,380 516,415 523,500 537,522 567,535 620,536 665,531 690,509"]],
  [[0, 1, "690,509 740,527 762,547 785,560 813,588 828,627 849,656 880,658 914,647 932,653 948,666 952,690 948,735 910,768 890,774 855,781 808,782 750,807 724,831 721,855 733,907 805,982 817,988 835,999 865,1028 890,1077 912,1125 952,1145"]],
  [[0, 1, "690,509 740,479 752,462 760,446 765,410 790,382 799,364 822,344 838,320 860,293 890,272 923,255 950,234 980,216 1030,206 1068,200 1105,189 1130,176 1185,153"], [1, 1, "33,129 65,101 101,62 138,0"], [1, 0, "176,1084 190,1046 215,1015 249,964 295,927 357,880 400,861 437,848 460,846 520,833 565,814 578,806 610,770 640,740 665,732 704,699 755,687"]],
  [[0, 1, "18,942 47,925 55,888 84,862 155,831 215,800 323,737 365,729 405,712 430,707 500,710 535,717 563,719 620,692 675,683 690,682 720,678 743,670 755,660 766,638 790,627 825,600"]],
  [[0, 1, "952,718 993,702 1010,665 1022,632 1044,545 1057,454 1080,452 1130,443"], [1, 1, "45,434 100,432 138,425 165,425 195,430 218,425 232,413 257,382 277,343 307,310 348,265 407,220 451,166 476,151 505,101 545,68 585,0"], [1, 0, "615,1113 643,1083 687,1050 730,1030 770,997 850,943 935,870 948,860 952,808 970,785 985,773 1045,746 1080,725 1125,687"]],
  [[1, 0, "932,866 985,892 1025,911 1068,918 1125,919"]],
  [[1, 1, "218,425 257,382 335,381 375,373 405,357 425,350 451,334 481,336 505,321 520,309 545,280 572,254 592,227 615,206 637,191 684,129 725,96 752,77 847,6"], [1, 0, "960,1120 988,1096 1040,1063 1080,1056 1110,1054 1125,1051"]],
  [[1, 1, "218,425 228,437 250,443 280,443 303,450 343,448 378,439 400,461 423,476 448,476 478,490 500,497 560,503 592,510 615,494 643,478 673,485 703,478 728,476 765,460 800,440 845,413 907,396 937,373 958,364 973,340"]],
  [[0, 1, "817,988 865,964 925,943 957,928 1005,918 1052,915 1088,908 1130,889 1160,872"], [1, 1, "17,862 65,865 105,872 240,869 300,853 360,828 410,823 460,805 550,755 592,738 643,742 685,734 730,720 780,700 915,601 990,569 1035,549 1065,523 1125,475"]],
];

function MapCanvas() {
  return (
    <svg width="1619" height="776" viewBox="-1293 -12 4857 2328" className="block" fill="none">
      <rect width="4857" height="2328" x="-1293" y="-12" fill="#fff" />
      <g stroke="#232323" strokeWidth="3.600" strokeLinejoin="round">
        <rect x="19" y="26" width="2273" height="2273" fill="#e6b88a" />
        <path d={trace(ROCK, true)} fill="#67e7a8" />
        {MIX.map((p, i) => <path key={i} d={trace(p, true)} fill="#85e51c" />)}
        {AGRI.map((p, i) => <path key={i} d={trace(p, true)} fill="#d2c3e3" />)}
        <path d={trace(BAGH, true)} fill="#f22c8e" />
        <path d="M19 27H2292.500V2299" stroke="#5d5a55" strokeWidth="4.500" />
      </g>
      <g stroke="#0a1cff" strokeWidth="7" strokeLinejoin="round">
        {RIVERS.map((p, i) => <path key={i} d={trace(p)} />)}
      </g>
      <circle cx="1175" cy="1247" r="7.500" fill="#ea1c1c" />
    </svg>
  );
}

/* ---------- status bar ---------- */
function Spin({ value, w }: { value: string; w: string }) {
  return (
    <div className={`flex h-[23px] ${w} shrink-0 items-center rounded-[3px] border border-[#a9a9a9] bg-white pl-[4px]`}>
      <span className="flex-1 pt-px tracking-[0.3px]">{value}</span>
      <span className="flex h-full w-4 items-center justify-center border-l border-[#b9b9b9] bg-[#f8f8f8]">
        <svg width="10" height="15" viewBox="0 0 10 15"><path d="M0 5.500L5 0L10 5.500ZM0 9.500H10L5 15Z" fill="#606060" /></svg>
      </span>
    </div>
  );
}
function StatusBar() {
  return (
    <div className="flex h-[30px] shrink-0 items-center border-t border-[#b6b6b6] bg-[#f0f0f0] pt-[3px] pl-1 text-xs">
      <div className="flex h-6 w-[232px] shrink-0 items-center rounded-[3px] border border-[#a9a9a9] bg-white pl-2 text-[12.500px] tracking-[0.15px] text-[#7a7a7a]">
        <svg width="13" height="13" viewBox="0 0 13 13" fill="none" stroke="#8a8a8a" strokeWidth="1.500" className="mr-[7px]"><circle cx="5.200" cy="5.200" r="4.200" /><path d="M8.500 8.500L12.500 12.500" /></svg>
        <span className="pt-[2px]">Type to locate (Ctrl+K)</span>
      </div>
      <div className="ml-2 w-[768px] shrink-0 pt-[2px] tracking-[0.28px] whitespace-nowrap">Saved project to: E:\ProjectofTah\Python_Project.qgz</div>
      <div className="w-[65px] shrink-0 pt-[2px]">Coordinate</div>
      <div className="flex h-[23px] w-[110px] shrink-0 items-center rounded-[3px] border border-[#a9a9a9] bg-white pt-px pl-[6px] tracking-[0.17px]">209549,4055277</div>
      <div className="flex w-[37px] shrink-0 pl-1">
        <svg width="19" height="20" viewBox="0 0 19 20" fill="none"><path d="M2 5C4 1 10 0 11 4L18 12C19 17 13 20 10 17L2 9C1 8 1.500 6 2 5Z" fill="#fff" stroke="#111" strokeWidth="1.300" /><path d="M3 9L11 3M6 4L14 12M3 6L11 14M8 15C9 12 13 10 16 10" stroke="#111" strokeWidth="1.900" /><circle cx="12" cy="15" r="2.500" fill="#fff" stroke="#111" strokeWidth="1.400" /><path d="M12 4L18 0M1 13L5 18" stroke="#111" strokeWidth="1.200" strokeDasharray="1.500 1.500" /></svg>
      </div>
      <div className="w-[34px] shrink-0 pt-px tracking-[0.3px]">Scale</div>
      <div className="flex h-[23px] w-[93px] shrink-0 items-center rounded-[3px] border border-[#a9a9a9] bg-white pl-[3px]">
        <span className="flex-1 pt-px tracking-[0.2px]">1:62352</span>
        <span className="flex h-full w-6 items-center justify-center bg-[#f5f5f5] pr-[8px]"><Caret /></span>
      </div>
      <div className="flex w-[37px] shrink-0 pl-3">
        <svg width="17" height="20" viewBox="0 0 17 20" fill="none"><path d="M3.500 9V6A5 5 0 0 1 13.500 6V9" stroke="#8a8a8a" strokeWidth="2" /><rect x="1" y="8.500" width="15" height="11" rx="1" fill="#606060" /><path d="M1 11H16M1 14H16M1 17H16" stroke="#777" strokeWidth=".8" /></svg>
      </div>
      <div className="w-[56px] shrink-0 pt-[2px]">Magnifier</div>
      <Spin value="100%" w="w-[92px]" />
      <div className="ml-[10px] w-[56px] shrink-0 pt-[2px]">Rotation</div>
      <Spin value="0.0 °" w="w-[89px]" />
      <div className="ml-[6px] flex w-[23px] shrink-0"><Check on /></div>
      <div className="w-[58px] shrink-0 pt-px">Render</div>
      <div className="flex w-[24px] shrink-0"><svg width="19" height="18" viewBox="0 0 19 18" fill="none" stroke="#6e6e6e" strokeWidth="1.200"><path d="M1 8C1 3 5 1 9.500 1C14 1 18 3 18 8L13 16H6Z" fill="#bdbdbd" /><path d="M0 8H19M2 4.500H17M3 12H16M6 1.500L5 12L7 16.500M13 1.500L14 12L12 16.500M9.500 0V17" /></svg></div>
      <div className="w-[91px] shrink-0 pt-[2px] tracking-[0.35px]">EPSG:32639</div>
      <svg width="21" height="20" viewBox="0 0 21 20"><path d="M10 1C16 1 20 3.500 20 8C20 11 18.500 13 16.500 14L18 19L12 15.500C4 16 .5 13 .5 8.500C.5 3.500 4 1 10 1Z" fill="#646464" /><circle cx="6" cy="8.500" r="1.500" fill="#fff" /><circle cx="10.300" cy="8.500" r="1.500" fill="#fff" /><circle cx="14.600" cy="8.500" r="1.500" fill="#fff" /></svg>
    </div>
  );
}

export default function App() {
  return (
    <div className="flex h-[1017px] w-[1918px] flex-col overflow-hidden bg-[#f0f0f0] font-['Open_Sans',sans-serif] text-black">
      <div className="flex h-[29px] shrink-0 items-center bg-linear-to-r from-[#e6f5fb] via-[#e9f6ee] via-40% to-[#ebf4f8] to-60% pb-px pl-[2px]">
        <svg width="20" height="20" viewBox="0 0 20 20" fill="none"><circle cx="9.500" cy="9.500" r="7.300" stroke="#5d9d2b" strokeWidth="4" /><path d="M3 6A7.300 7.300 0 0 1 13 3" stroke="#8dbf3e" strokeWidth="4" /><path d="M10 10L18.500 18.500" stroke="#5d9d2b" strokeWidth="4" /><path d="M8.500 8.500L12 12" stroke="#ee7913" strokeWidth="3.500" /></svg>
        <span className="ml-[5px] flex-1 text-[14.400px]">Python_Project — QGIS</span>
        <svg width="154" height="14" viewBox="0 0 154 14" fill="none" stroke="#111" strokeWidth="1.100"><path d="M1 6.500H13" /><rect x="59.500" y="3.500" width="8.500" height="8.500" rx="1.500" /><path d="M62 1.500H67.500C69 1.500 70 2.500 70 4V9.500" /><path d="M118 1.500L129 12.500M129 1.500L118 12.500" /></svg>
      </div>
      <MenuBar />
      <BarOne />
      <BarTwo />
      <BarThree />
      <BarFour />
      <div className="flex h-[777px] shrink-0">
        <SideStrip />
        <div className="flex w-[244px] shrink-0 flex-col border-l border-[#b6b6b6]">
          <BrowserPanel />
          <LayersPanel />
        </div>
        <div className="flex-1 border-t border-l border-[#b6b6b6]"><MapCanvas /></div>
      </div>
      <StatusBar />
    </div>
  );
}
